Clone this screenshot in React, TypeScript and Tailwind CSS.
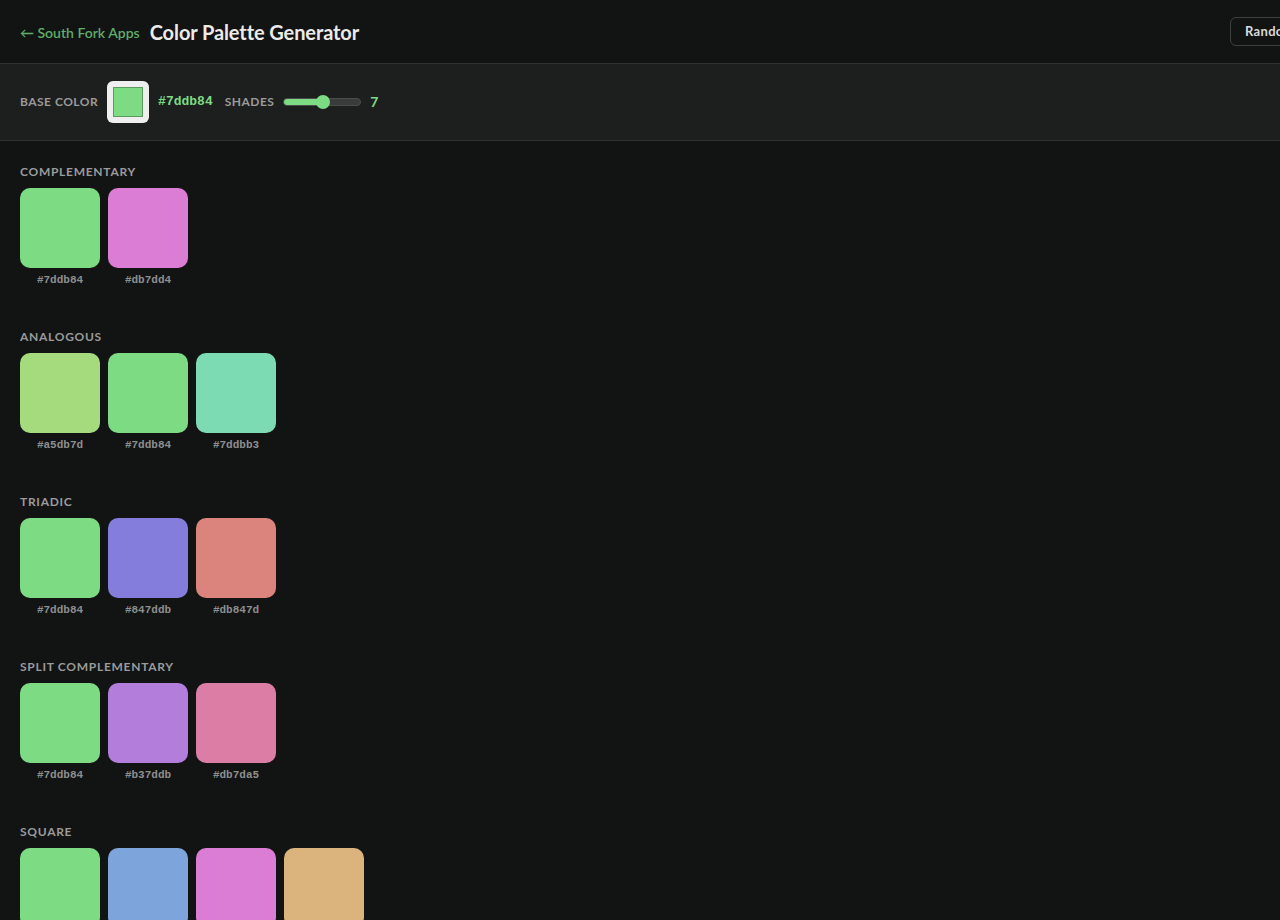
const palettes: { name: string; colors: string[] }[] = [
  { name: 'Complementary', colors: ['#7ddb84', '#db7dd4'] },
  { name: 'Analogous', colors: ['#a5db7d', '#7ddb84', '#7ddbb3'] },
  { name: 'Triadic', colors: ['#7ddb84', '#847ddb', '#db847d'] },
  { name: 'Split Complementary', colors: ['#7ddb84', '#b37ddb', '#db7da5'] },
  { name: 'Square', colors: ['#7ddb84', '#7da5db', '#db7dd4', '#dbb37d'] },
];

const Swatch = ({ color }: { color: string }) => (
  <div className="flex flex-col items-center w-20">
    <div className="w-20 h-20 rounded-[10px]" style={{ backgroundColor: color }} />
    <span className="mt-1 text-[11px] leading-4 font-bold text-[#8d8f8e] font-['Liberation_Mono',monospace]">
      {color}
    </span>
  </div>
);

const App = () => {
  return (
    <div className="min-h-screen w-full overflow-hidden bg-[#121313] text-[#e8e9e8] font-['Lato','Inter',sans-serif]">
      <header className="w-[1350px] h-16 px-5 flex items-center justify-between border-b border-[#2f3030]">
        <div className="flex items-center gap-[10px] pt-px">
          <a className="text-[14px] font-semibold text-[#5fae68]">← South Fork Apps</a>
          <h1 className="text-[20px] font-bold tracking-[-0.005em] text-[#ebebea]">Color Palette Generator</h1>
        </div>
        <button className="h-[29px] w-[100px] text-left px-3.5 rounded-md border border-[#3e403f] text-[13px] font-bold tracking-wide text-[#d9dad9]">
          Randomize
        </button>
      </header>

      <div className="h-[77px] px-5 flex items-center bg-[#1d1e1e] border-b border-[#2f3030]">
        <span className="text-xs font-bold uppercase tracking-[0.04em] text-[#9a9b9a]">Base Color</span>
        <div className="ml-[9px] w-[42px] h-[42px] rounded-md bg-[#efefef] p-[6px]">
          <div className="w-full h-full bg-[#7ddb84] border border-[#5d9a62]" />
        </div>
        <span className="ml-[9px] text-[13px] font-bold text-[#7ddb84] font-['Liberation_Mono',monospace]">#7ddb84</span>
        <span className="ml-[12px] text-xs font-bold uppercase tracking-[0.04em] text-[#9a9b9a]">Shades</span>
        <div className="ml-[9px] relative w-[78px] h-[8px] rounded-full bg-[#3a3b3b] border border-[#4a4b4b]">
          <div className="h-full w-[50%] rounded-full bg-[#7ddb84]" />
          <div className="absolute top-1/2 left-[32px] -translate-y-1/2 w-[14px] h-[14px] rounded-full bg-[#7ddb84]" />
        </div>
        <span className="ml-[9px] text-sm font-bold text-[#7ddb84]">7</span>
      </div>

      <main className="px-5 pt-[23px] flex flex-col gap-[41px]">
        {palettes.map((p) => (
          <section key={p.name}>
            <h2 className="text-xs leading-4 font-bold uppercase tracking-[0.06em] text-[#9a9b9a]">{p.name}</h2>
            <div className="mt-2 flex gap-2">
              {p.colors.map((c, i) => (
                <Swatch key={i} color={c} />
              ))}
            </div>
          </section>
        ))}
      </main>
    </div>
  );
};

export default App;
